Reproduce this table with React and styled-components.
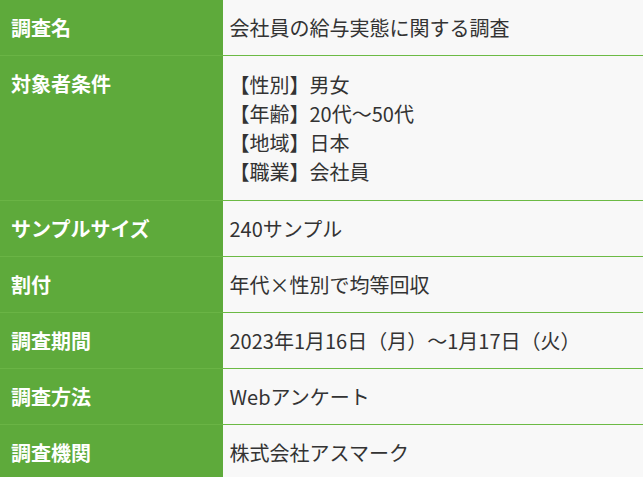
import React from 'react';
import styled, { createGlobalStyle } from 'styled-components';

const GlobalStyle = createGlobalStyle`
  html, body {
    margin: 0;
    padding: 0;
    background: #f8f8f8;
  }
  body {
    font-family: "Noto Sans CJK JP", "Noto Sans", sans-serif;
  }
`;

const Table = styled.table`
  width: 100%;
  border-collapse: collapse;
  font-size: 20px;
  line-height: 29px;
  margin-top: -1px;
`;

const Row = styled.tr`
  border-top: 1px solid #6cba44;
`;

const Label = styled.th`
  width: 222px;
  box-sizing: border-box;
  background: #5eaa3b;
  color: #fff;
  font-weight: 700;
  text-align: left;
  vertical-align: top;
  padding: 13px 11px 13px;
  border-bottom: 1px solid #6ab445;
`;

const Value = styled.td`
  background: #f8f8f8;
  color: #333;
  padding: 13px 7px 13px;
  vertical-align: middle;
  border-bottom: 1px solid #6cba44;
  border-left: 1px solid #5eaa3b;
`;

const Lines = styled.div`
  padding: 1px 0;
`;

const rows = [
  { label: '調査名', value: '会社員の給与実態に関する調査' },
  {
    label: '対象者条件',
    lines: ['【性別】男女', '【年齢】20代～50代', '【地域】日本', '【職業】会社員'],
  },
  { label: 'サンプルサイズ', value: '240サンプル' },
  { label: '割付', value: '年代×性別で均等回収' },
  { label: '調査期間', value: '2023年1月16日（月）～1月17日（火）' },
  { label: '調査方法', value: 'Webアンケート' },
  { label: '調査機関', value: '株式会社アスマーク' },
];

export default function App() {
  return (
    <>
      <GlobalStyle />
      <Table>
        <tbody>
          {rows.map(({ label, value, lines }) => (
            <Row key={label}>
              <Label>{label}</Label>
              <Value>
                {lines ? (
                  <Lines>
                    {lines.map((l) => (
                      <div key={l}>{l}</div>
                    ))}
                  </Lines>
                ) : (
                  value
                )}
              </Value>
            </Row>
          ))}
        </tbody>
      </Table>
    </>
  );
}
